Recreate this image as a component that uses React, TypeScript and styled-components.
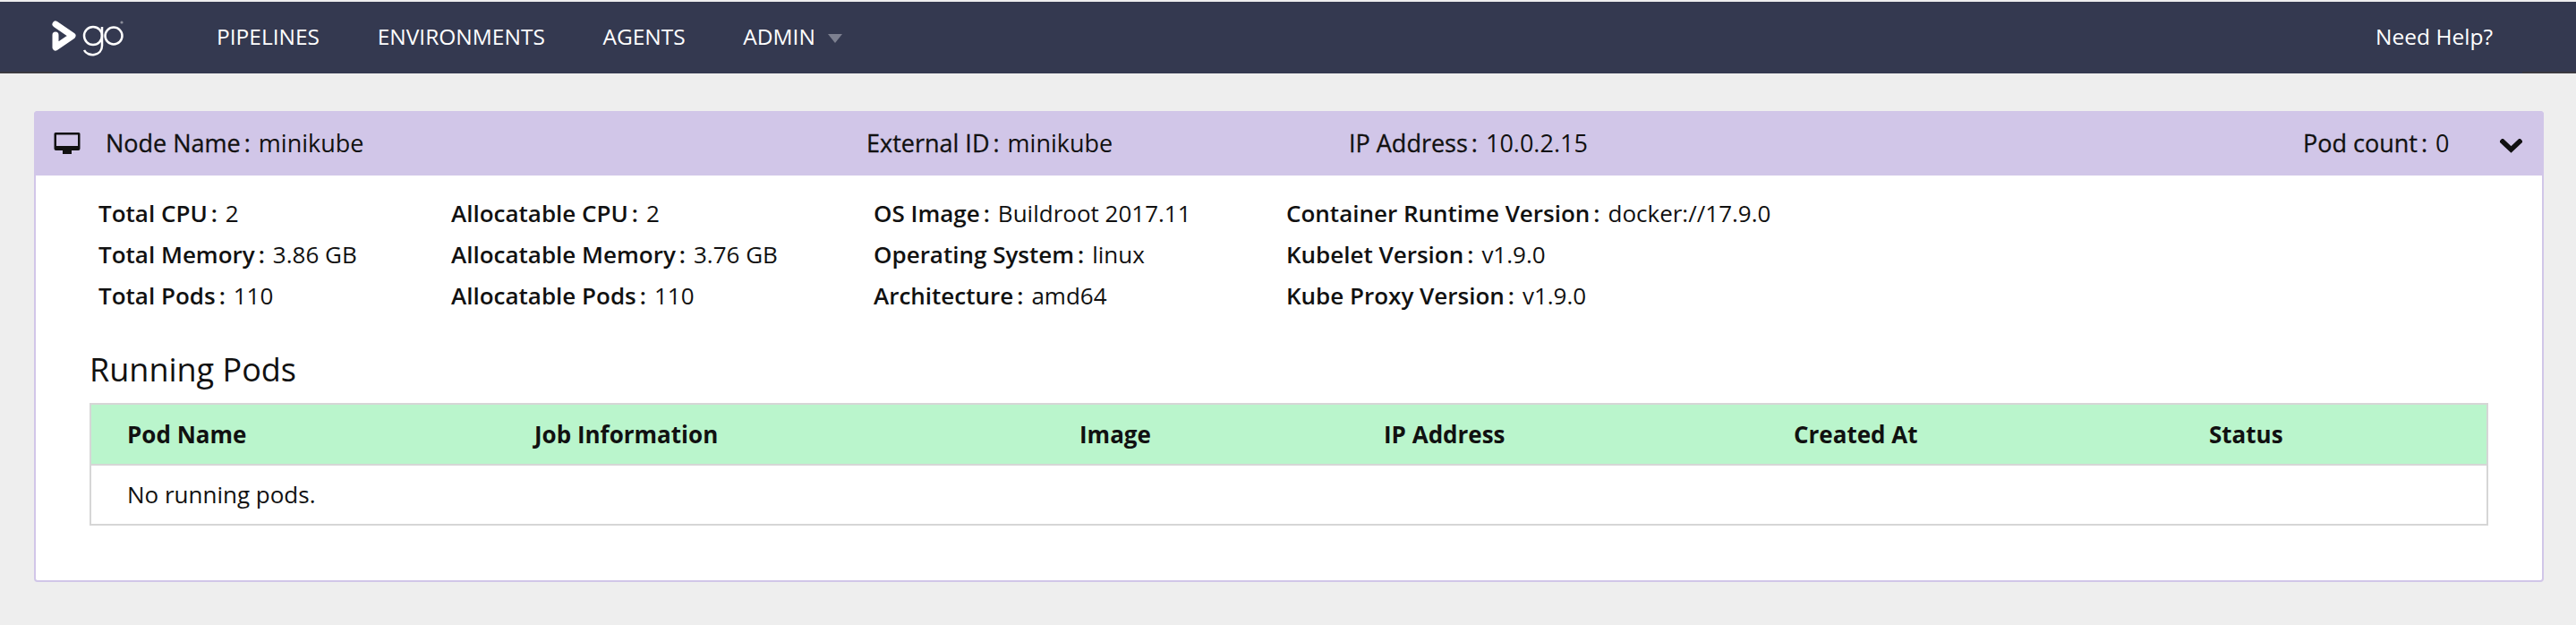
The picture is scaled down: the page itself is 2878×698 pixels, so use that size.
import React from "react";
import styled, { createGlobalStyle } from "styled-components";

const GlobalStyle = createGlobalStyle`
  html, body {
    margin: 0;
    padding: 0;
    background: #eeeeee;
    font-family: "Open Sans", "Liberation Sans", sans-serif;
    color: #111;
  }
  * { box-sizing: border-box; }
`;

const Page = styled.div`
  width: 2878px;
  height: 698px;
  padding-top: 2px;
  overflow: hidden;
`;

const Header = styled.header`
  height: 80px;
  background: #343950;
  display: flex;
  align-items: center;
  padding: 0 93px 0 56px;
  position: relative;

  &::before,
  &::after {
    content: "";
    position: absolute;
    bottom: 0;
    height: 2px;
    background: #3b3a40;
  }
  &::before {
    left: 0;
    width: 58px;
  }
  &::after {
    right: 0;
    width: 60px;
  }
`;

const Logo = styled.svg`
  width: 90px;
  height: 60px;
  flex: none;
`;

const Nav = styled.nav`
  display: flex;
  align-items: center;
  margin-left: 96px;
  gap: 64.6px;
  flex: 1;
`;

const NavLink = styled.a`
  color: #fff;
  font-size: 24.5px;
  padding-bottom: 4px;
  display: flex;
  align-items: center;
  gap: 14px;
`;

const Caret = styled.span`
  width: 0;
  height: 0;
  margin-top: 5px;
  border-left: 8px solid transparent;
  border-right: 8px solid transparent;
  border-top: 10px solid #7d8090;
`;

const Help = styled.a`
  color: #fff;
  font-size: 24.5px;
  padding-bottom: 4px;
`;

const Card = styled.section`
  margin: 42px 36px 0 38px;
  height: 526px;
  background: #fff;
  border: 2px solid #d1c6e8;
  border-radius: 4px;
`;

const CardHead = styled.div`
  height: 72px;
  background: #d1c6e8;
  margin: -2px -2px 0;
  border-radius: 4px 4px 0 0;
  display: grid;
  grid-template-columns: 58px 850px 539px 1066px 220px 49px;
  align-items: center;
  padding-left: 22px;
`;

const Screen = styled.svg`
  width: 30px;
  height: 26px;
`;

const Pair = styled.div`
  white-space: nowrap;
  font-size: 26px;
  line-height: 46px;
`;

const HeadPair = styled(Pair)`
  font-size: 27px;
`;

const Key = styled.span`
  font-weight: 600;
  &::after {
    content: ":";
    margin: 0 9px 0 4px;
  }
`;

const HeadKey = styled(Key)`
  font-weight: 400;
  -webkit-text-stroke: 0.3px #111;
`;

const Chevron = styled.svg`
  width: 25px;
  height: 16px;
  display: block;
  margin-top: 5px;
`;

const Details = styled.div`
  display: grid;
  grid-template-columns: 394px 472px 461px 1fr;
  padding: 19px 0 0 70px;
`;

const Title = styled.h2`
  margin: 35px 0 0 60px;
  font-size: 36px;
  font-weight: 400;
  line-height: 50px;
`;

const Table = styled.div`
  margin: 12px 60px 0 60px;
  border: 2px solid #d6d6d6;
`;

const Row = styled.div`
  display: grid;
  grid-template-columns: 455px 609px 340px 458px 464px 1fr;
  height: 68px;
  align-items: center;
  padding-left: 40px;
  background: #baf5cc;
  border-bottom: 2px solid #d6d6d6;
`;

const Heading = styled.div`
  font-size: 26px;
  font-weight: 700;
`;

const Empty = styled.div`
  height: 65px;
  line-height: 65px;
  padding-left: 40px;
  font-size: 26px;
`;

const nodeCols = [
  [["Total CPU", "2"], ["Total Memory", "3.86 GB"], ["Total Pods", "110"]],
  [["Allocatable CPU", "2"], ["Allocatable Memory", "3.76 GB"], ["Allocatable Pods", "110"]],
  [["OS Image", "Buildroot 2017.11"], ["Operating System", "linux"], ["Architecture", "amd64"]],
  [["Container Runtime Version", "docker://17.9.0"], ["Kubelet Version", "v1.9.0"], ["Kube Proxy Version", "v1.9.0"]],
];

const headings = ["Pod Name", "Job Information", "Image", "IP Address", "Created At", "Status"];

export default function App() {
  return (
    <Page>
      <GlobalStyle />
      <Header>
        <Logo viewBox="0 0 90 60">
          <path d="M6 15 L25 28 L6 41 V27" fill="none" stroke="#fff" strokeWidth="7" strokeLinejoin="round" strokeLinecap="round" />
          <circle cx="48" cy="28" r="10" fill="none" stroke="#fff" strokeWidth="2.5" />
          <path d="M58 18 V39 C58 51 42 52 38 44" fill="none" stroke="#fff" strokeWidth="2.5" />
          <circle cx="71" cy="28" r="9.5" fill="none" stroke="#fff" strokeWidth="2.5" />
          <circle cx="80" cy="13" r="1.6" fill="#8b8d9a" />
        </Logo>
        <Nav>
          <NavLink>PIPELINES</NavLink>
          <NavLink>ENVIRONMENTS</NavLink>
          <NavLink>AGENTS</NavLink>
          <NavLink>ADMIN <Caret /></NavLink>
        </Nav>
        <Help>Need Help?</Help>
      </Header>
      <Card>
        <CardHead>
          <Screen viewBox="0 0 30 26">
            <path d="M2 1 H28 A1.5 1.5 0 0 1 29.5 2.5 V19 A2 2 0 0 1 27.5 21 H2.5 A2 2 0 0 1 .5 19 V2.5 A1.5 1.5 0 0 1 2 1 Z M3 3.5 V16 H27 V3.5 Z" fill="#111" fillRule="evenodd" />
            <rect x="10" y="21" width="10" height="4" fill="#111" />
          </Screen>
          <HeadPair><HeadKey>Node Name</HeadKey>minikube</HeadPair>
          <HeadPair><HeadKey>External ID</HeadKey>minikube</HeadPair>
          <HeadPair><HeadKey>IP Address</HeadKey>10.0.2.15</HeadPair>
          <HeadPair><HeadKey>Pod count</HeadKey>0</HeadPair>
          <Chevron viewBox="0 0 25 16">
            <path d="M3 3 L12.5 12 L22 3" fill="none" stroke="#111" strokeWidth="5.5" strokeLinecap="square" />
          </Chevron>
        </CardHead>
        <Details>
          {nodeCols.map((col) => (
            <div key={col[0][0]}>
              {col.map(([k, v]) => (
                <Pair key={k}><Key>{k}</Key>{v}</Pair>
              ))}
            </div>
          ))}
        </Details>
        <Title>Running Pods</Title>
        <Table>
          <Row>
            {headings.map((h) => <Heading key={h}>{h}</Heading>)}
          </Row>
          <Empty>No running pods.</Empty>
        </Table>
      </Card>
    </Page>
  );
}
